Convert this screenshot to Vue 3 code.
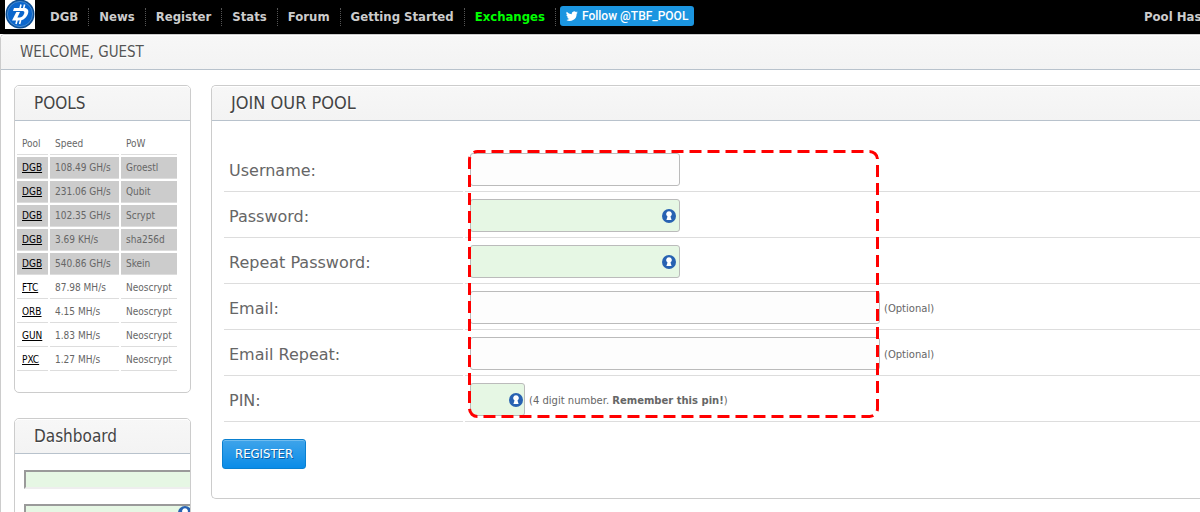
<script setup>
const links = ['DGB', 'News', 'Register', 'Stats', 'Forum', 'Getting Started', 'Exchanges']

const pools = [
  { pool: 'DGB', speed: '108.49 GH/s', pow: 'Groestl' },
  { pool: 'DGB', speed: '231.06 GH/s', pow: 'Qubit' },
  { pool: 'DGB', speed: '102.35 GH/s', pow: 'Scrypt' },
  { pool: 'DGB', speed: '3.69 KH/s', pow: 'sha256d' },
  { pool: 'DGB', speed: '540.86 GH/s', pow: 'Skein' },
  { pool: 'FTC', speed: '87.98 MH/s', pow: 'Neoscrypt' },
  { pool: 'ORB', speed: '4.15 MH/s', pow: 'Neoscrypt' },
  { pool: 'GUN', speed: '1.83 MH/s', pow: 'Neoscrypt' },
  { pool: 'PXC', speed: '1.27 MH/s', pow: 'Neoscrypt' },
]

const fields = [
  { id: 'username', label: 'Username:', type: 'text', size: 'medium' },
  { id: 'password', label: 'Password:', type: 'password', size: 'medium', key: true },
  { id: 'password2', label: 'Repeat Password:', type: 'password', size: 'medium', key: true },
  { id: 'email', label: 'Email:', type: 'email', size: 'large', note: '(Optional)' },
  { id: 'email2', label: 'Email Repeat:', type: 'email', size: 'large', note: '(Optional)' },
  { id: 'pin', label: 'PIN:', type: 'password', size: 'small', key: true, pin: true },
]
</script>

<template>
  <div class="page">
    <header class="topbar">
      <a class="logo" href="#" aria-label="Home">
        <svg viewBox="0 0 30 29" width="30" height="29">
          <rect width="30" height="29" fill="#fff" />
          <circle cx="15" cy="14" r="14.5" fill="#0c4f96" />
          <circle cx="15" cy="14" r="12.6" fill="#0b66cc" stroke="#6fa6de" stroke-width=".6" />
          <path fill="#fff" fill-rule="evenodd" d="M9 8h10c4 0 5 2.500 4 5.500-1.300 4.200-4.600 7-9 7H7l4.300-8.500h3.700l-2.600 5.500h1.900c2.300 0 4-1.400 4.800-3.700.6-1.700.3-2.800-1.500-2.800H8z" />
          <path fill="none" stroke="#fff" stroke-width="1.600" d="M15 8.500l1-4M18.600 8.500l1-4M11 24l1.100-4M14.600 24l1.100-4" />
        </svg>
      </a>
      <nav class="nav">
        <a v-for="link in links" :key="link" href="#" :class="{ hot: link === 'Exchanges' }">{{ link }}</a>
      </nav>
      <a class="follow" href="#">
        <svg viewBox="0 0 24 24" width="12" height="12">
          <path fill="#fff" d="M23.600 4.900c-.9.400-1.800.6-2.800.8 1-.6 1.800-1.600 2.100-2.700-.9.600-2 1-3.100 1.200A4.900 4.900 0 0 0 11.500 8.600 13.800 13.800 0 0 1 1.500 3.500a4.900 4.900 0 0 0 1.500 6.500c-.8 0-1.600-.2-2.200-.6v.1c0 2.300 1.700 4.300 3.900 4.700-.7.200-1.500.2-2.200.1.600 1.900 2.400 3.300 4.500 3.400A9.800 9.800 0 0 1 0 19.700 13.800 13.800 0 0 0 21.200 7.400c.9-.7 1.700-1.500 2.400-2.500z" />
        </svg>
        <span>Follow @TBF_POOL</span>
      </a>
      <div class="rate">Pool Has</div>
    </header>

    <main class="shell">
      <h1 class="bar welcome">WELCOME, GUEST</h1>
      <div class="columns">
        <aside class="side">
          <section class="card">
            <h2 class="bar">POOLS</h2>
            <table class="pools">
              <thead>
                <tr><th>Pool</th><th>Speed</th><th>PoW</th></tr>
              </thead>
              <tbody>
                <tr v-for="(row, i) in pools" :key="i" :class="{ shaded: row.pool === 'DGB' }">
                  <td><a href="#">{{ row.pool }}</a></td>
                  <td>{{ row.speed }}</td>
                  <td>{{ row.pow }}</td>
                </tr>
              </tbody>
            </table>
          </section>
          <section class="card">
            <h2 class="bar">Dashboard</h2>
            <form class="login" @submit.prevent>
              <input type="text" aria-label="Account" />
              <span class="login-key">
                <input type="password" aria-label="Account password" />
                <svg class="key" viewBox="0 0 14 14" width="14" height="14">
                  <circle cx="7" cy="7" r="7" fill="#2862b2" />
                  <path fill="#fff" d="M7 2.300a2.800 2.800 0 0 0-1.500 5.200L4.400 11h5.200L8.500 7.500A2.800 2.800 0 0 0 7 2.300z" />
                </svg>
              </span>
            </form>
          </section>
        </aside>

        <section class="card join">
          <h2 class="bar">JOIN OUR POOL</h2>
          <form class="register" @submit.prevent>
            <div class="fields">
              <table>
                <tbody>
                  <tr v-for="f in fields" :key="f.id">
                    <th scope="row"><label :for="f.id">{{ f.label }}</label></th>
                    <td>
                      <div class="cell">
                        <span class="field" :class="f.size">
                          <input :id="f.id" :type="f.type" :class="{ filled: f.key }" />
                          <svg v-if="f.key" class="key" viewBox="0 0 14 14" width="14" height="14">
                            <circle cx="7" cy="7" r="7" fill="#2862b2" />
                            <path fill="#fff" d="M7 2.300a2.800 2.800 0 0 0-1.500 5.200L4.400 11h5.200L8.500 7.500A2.800 2.800 0 0 0 7 2.300z" />
                          </svg>
                        </span>
                        <span v-if="f.note" class="note">{{ f.note }}</span>
                        <span v-if="f.pin" class="note">(4 digit number. <b>Remember this pin!</b>)</span>
                      </div>
                    </td>
                  </tr>
                </tbody>
              </table>
              <svg class="marker" viewBox="0 0 411 268" width="411" height="268">
                <rect x="1.500" y="1.500" width="408" height="265" rx="8" fill="none" stroke="#f00" stroke-width="3" stroke-dasharray="12 6" stroke-dashoffset="4" />
              </svg>
            </div>
            <button type="submit">REGISTER</button>
          </form>
        </section>
      </div>
    </main>
  </div>
</template>

<style>
body {
  margin: 0;
  background: #fff;
}
html {
  overflow: hidden;
}
</style>

<style scoped>
* {
  box-sizing: border-box;
}
.page {
  height: 100vh;
  overflow: hidden;
  font-family: "DejaVu Sans", Verdana, sans-serif;
  font-size: 10px;
  color: #666;
}
.topbar {
  display: flex;
  align-items: flex-start;
  height: 34px;
  padding-left: 5px;
  background: #000;
  font: bold 13px/18px "DejaVu Sans Condensed", "DejaVu Sans", sans-serif;
  color: #ccc;
  white-space: nowrap;
  overflow: hidden;
}
.logo svg,
.follow svg {
  display: block;
}
.nav {
  display: flex;
  padding: 8px 0 0 5px;
}
.nav a {
  padding: 0 10px;
  border-right: 1px dotted #555;
  color: #ccc;
  text-decoration: none;
}
.nav .hot {
  color: #0f0;
}
.follow {
  display: flex;
  align-items: center;
  gap: 4px;
  height: 20px;
  margin: 6px 0 0 4px;
  padding: 0 6px;
  border-radius: 3px;
  background: #1b95e0;
  color: #fff;
  font: 500 12px/20px Roboto, Arial, sans-serif;
  text-decoration: none;
}
.rate {
  width: 56px;
  margin: 8px 0 0 auto;
  overflow: hidden;
}
.shell {
  border: 1px solid #ccc;
  border-right: 0;
  border-radius: 5px 0 0 0;
  min-height: 100vh;
}
.bar {
  margin: 0;
  height: 35px;
  padding-left: 19px;
  border-bottom: 1px solid #b8c2cc;
  border-radius: 4px 4px 0 0;
  background: linear-gradient(#f7f7f7, #f3f3f3);
  box-shadow: inset 0 1px #fff;
  color: #444;
  font: 17px/34px "DejaVu Sans Condensed", "DejaVu Sans", sans-serif;
  text-shadow: 0 1px #fff;
}
.welcome {
  font-size: 15px;
  color: #555;
}
.columns {
  display: flex;
  align-items: flex-start;
  gap: 20px;
  padding: 15px 0 0 13px;
}
.side {
  flex: 0 0 177px;
  display: grid;
  gap: 25px;
}
.card {
  min-width: 0;
  border: 1px solid #ccc;
  border-radius: 5px;
  overflow: hidden;
}
.join {
  flex: 1;
  border-right: 0;
  border-radius: 5px 0 0 5px;
}
.join .bar {
  font-size: 18px;
}
.join .bar,
.welcome {
  border-radius: 4px 0 0 0;
}
.pools {
  margin: 10px 0 19px;
  border-spacing: 2px;
  font: 10px/21px "DejaVu Sans Condensed", "DejaVu Sans", sans-serif;
  white-space: nowrap;
}
.pools th,
.pools td {
  height: 22px;
  padding: 0 5px;
  border-bottom: 1px solid #ddd;
  text-align: left;
  font-weight: normal;
}
.pools th:nth-child(1) {
  width: 31px;
}
.pools th:nth-child(2) {
  width: 69px;
}
.pools th:nth-child(3) {
  width: 56px;
}
.pools a {
  color: #000;
}
.shaded td {
  background: #ccc;
}
.login {
  display: grid;
  gap: 15px;
  width: 180px;
  padding: 16px 0 20px 9px;
}
.login input {
  display: block;
  width: 171px;
  height: 19px;
  border: 2px inset #eee;
  background: #e6f7e4;
}
.login-key,
.field {
  position: relative;
}
.key {
  position: absolute;
  right: 4px;
  top: 10px;
}
.login-key .key {
  right: 3px;
  top: 2px;
}
.register {
  padding: 25px 0 29px 10px;
}
.fields {
  position: relative;
}
.fields table {
  width: calc(100% + 2px);
  border-spacing: 2px;
}
.fields th,
.fields td {
  height: 44px;
  padding: 5px;
  border-bottom: 1px solid #ddd;
  text-align: left;
  font-weight: normal;
}
.fields th {
  width: 239px;
  padding-top: 7px;
  font: 16px/20px "DejaVu Sans", sans-serif;
}
.cell {
  display: flex;
  align-items: center;
  gap: 4px;
}
.field input {
  display: block;
  width: 100%;
  height: 33px;
  padding: 0 8px;
  border: 1px solid #bbb;
  border-radius: 3px;
  background: #fdfdfd;
}
.field .filled {
  background: #e6f7e4;
}
.medium {
  width: 210px;
}
.large {
  width: 410px;
}
.small {
  width: 55px;
}
.small .key {
  right: 2px;
}
.note {
  padding-top: 2px;
  font-size: 10px;
}
.marker {
  position: absolute;
  left: 246px;
  top: 4px;
  pointer-events: none;
}
button {
  display: block;
  height: 30px;
  margin-top: 15px;
  padding: 0 12px;
  border: 1px solid #0a80d0;
  border-radius: 3px;
  background: linear-gradient(#3fa4ea, #0a8ce8);
  box-shadow: inset 0 1px #6fbcf0;
  color: #fff;
  font: 13px/28px "DejaVu Sans Condensed", "DejaVu Sans", sans-serif;
  text-shadow: 1px 1px #0a5a9c;
}
</style>
